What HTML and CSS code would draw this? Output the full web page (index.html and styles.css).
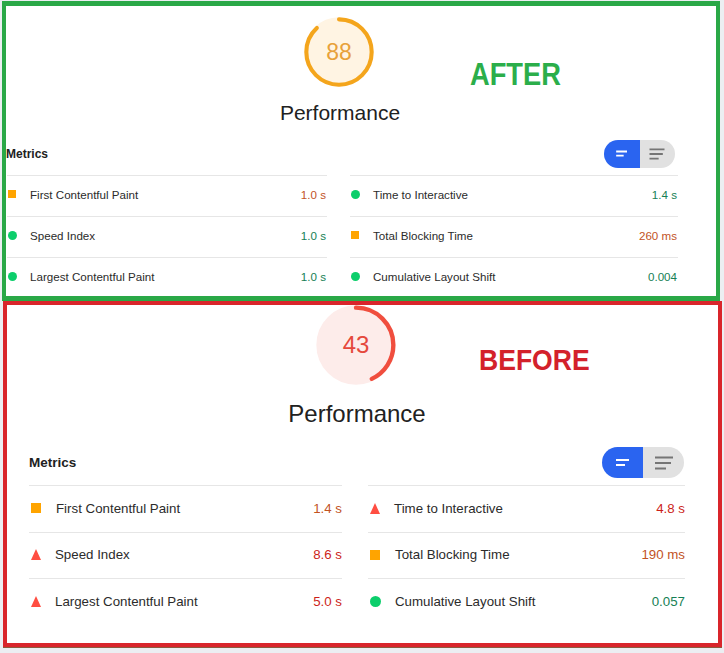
FILE: index.html
```html
<!DOCTYPE html>
<html lang="en">
<head>
<meta charset="utf-8">
<title>Performance before / after</title>
<link rel="stylesheet" href="styles.css">
</head>
<body>
<section class="shot shot-after">
  <div class="report report-after">
    <div class="gauge">
      <svg class="gauge-svg" viewBox="0 0 120 120">
        <circle class="gauge-base" cx="60" cy="60" r="56"/>
        <circle class="gauge-arc" cx="60" cy="60" r="56" stroke-dasharray="309.6 351.9" transform="rotate(-90 60 60)"/>
      </svg>
      <span class="gauge-num">88</span>
    </div>
    <div class="gauge-title">Performance</div>
    <div class="metrics-head">
      <span class="metrics-title">Metrics</span>
      <div class="toggle">
        <span class="toggle-half toggle-on">
          <svg viewBox="0 0 24 24"><path d="M5 9h13M5 14h9"/></svg>
        </span>
        <span class="toggle-half toggle-off">
          <svg viewBox="0 0 24 24"><path d="M3 6.5h18M3 12h16M3 17.5h11"/></svg>
        </span>
      </div>
    </div>
    <div class="metrics-grid">
      <div class="metric"><span class="icon icon-avg"></span><span class="label">First Contentful Paint</span><span class="value avg">1.0 s</span></div>
      <div class="metric"><span class="icon icon-pass"></span><span class="label">Time to Interactive</span><span class="value pass">1.4 s</span></div>
      <div class="metric"><span class="icon icon-pass"></span><span class="label">Speed Index</span><span class="value pass">1.0 s</span></div>
      <div class="metric"><span class="icon icon-avg"></span><span class="label">Total Blocking Time</span><span class="value avg">260 ms</span></div>
      <div class="metric"><span class="icon icon-pass"></span><span class="label">Largest Contentful Paint</span><span class="value pass">1.0 s</span></div>
      <div class="metric"><span class="icon icon-pass"></span><span class="label">Cumulative Layout Shift</span><span class="value pass">0.004</span></div>
    </div>
  </div>
  <div class="tag tag-after">AFTER</div>
</section>

<section class="shot shot-before">
  <div class="report report-before">
    <div class="gauge">
      <svg class="gauge-svg" viewBox="0 0 120 120">
        <circle class="gauge-base" cx="60" cy="60" r="56"/>
        <circle class="gauge-arc" cx="60" cy="60" r="56" stroke-dasharray="151.3 351.9" transform="rotate(-90 60 60)"/>
      </svg>
      <span class="gauge-num">43</span>
    </div>
    <div class="gauge-title">Performance</div>
    <div class="metrics-head">
      <span class="metrics-title">Metrics</span>
      <div class="toggle">
        <span class="toggle-half toggle-on">
          <svg viewBox="0 0 24 24"><path d="M5 9h13M5 14h9"/></svg>
        </span>
        <span class="toggle-half toggle-off">
          <svg viewBox="0 0 24 24"><path d="M3 6.5h18M3 12h16M3 17.5h11"/></svg>
        </span>
      </div>
    </div>
    <div class="metrics-grid">
      <div class="metric"><span class="icon icon-avg"></span><span class="label">First Contentful Paint</span><span class="value avg">1.4 s</span></div>
      <div class="metric"><span class="icon icon-fail"></span><span class="label">Time to Interactive</span><span class="value fail">4.8 s</span></div>
      <div class="metric"><span class="icon icon-fail"></span><span class="label">Speed Index</span><span class="value fail">8.6 s</span></div>
      <div class="metric"><span class="icon icon-avg"></span><span class="label">Total Blocking Time</span><span class="value avg">190 ms</span></div>
      <div class="metric"><span class="icon icon-fail"></span><span class="label">Largest Contentful Paint</span><span class="value fail">5.0 s</span></div>
      <div class="metric"><span class="icon icon-pass"></span><span class="label">Cumulative Layout Shift</span><span class="value pass">0.057</span></div>
    </div>
  </div>
  <div class="tag tag-before">BEFORE</div>
</section>
</body>
</html>
```

FILE: styles.css
```css
html, body {
  margin: 0;
  padding: 0;
}

body {
  background: #eceef2;
  font-family: "Liberation Sans", Arial, sans-serif;
  color: #212121;
  width: 724px;
  height: 653px;
  overflow: hidden;
}

.shot {
  position: relative;
  background: #ffffff;
  box-sizing: border-box;
  overflow: hidden;
}

.shot-after {
  margin: 1px 0 0 2px;
  width: 718px;
  height: 300px;
  border-style: solid;
  border-color: #2aa847;
  border-width: 5px 4px 5px 4px;
}

.shot-before {
  margin-left: 3px;
  width: 719px;
  height: 346px;
  border: 4px solid #d9252b;
  box-shadow: 0 1px 0 #8d5a3e;
}

/* ---------- report ---------- */
.report {
  display: flex;
  flex-direction: column;
}

.gauge {
  position: relative;
  display: flex;
  align-items: center;
  justify-content: center;
}

.gauge-svg {
  position: absolute;
  inset: 0;
  width: 100%;
  height: 100%;
}

.gauge-base {
  stroke-width: 7;
}

.gauge-arc {
  fill: none;
  stroke-width: 7;
  stroke-linecap: round;
}

.gauge-num {
  position: relative;
  line-height: 1;
}

.gauge-title {
  text-align: center;
}

.metrics-head {
  display: flex;
  align-items: center;
  justify-content: space-between;
}

.metrics-title {
  font-weight: bold;
}

.toggle {
  display: flex;
  border-radius: 999px;
  overflow: hidden;
}

.toggle-half {
  display: flex;
  align-items: center;
  justify-content: center;
  flex: 1;
}

.toggle-on {
  background: #2a64f0;
}

.toggle-off {
  background: #e1e1e1;
}

.toggle-on svg path {
  stroke: #ffffff;
  stroke-width: 2.2;
  fill: none;
}

.toggle-off svg path {
  stroke: #757575;
  stroke-width: 2.2;
  fill: none;
}

.metrics-grid {
  display: grid;
}

.metric {
  display: flex;
  align-items: center;
  box-sizing: border-box;
  border-top: 1px solid #e6e6e6;
}

.label {
  color: #2b2b2b;
}

.value {
  margin-left: auto;
}

.value.avg { color: #c2531f; }
.value.fail { color: #cc1f1a; }
.value.pass { color: #167f55; }

.icon {
  flex: none;
  display: block;
}

.icon-avg {
  background: #ffa400;
}

.icon-pass {
  background: #0cce6b;
  border-radius: 50%;
}

.icon-fail {
  width: 0 !important;
  height: 0 !important;
  background: transparent;
  border-style: solid;
  border-color: transparent transparent #ff4e42 transparent;
}

/* ---------- AFTER variant ---------- */
.report-after {
  width: 672px;
}

.report-after .gauge {
  width: 70px;
  height: 70px;
  margin: 11px 0 0 298px;
}

.report-after .gauge-base {
  fill: #fff4e3;
  stroke: #fff4e3;
}

.report-after .gauge-arc {
  stroke: #f4a51c;
}

.report-after .gauge-num {
  font-size: 23px;
  color: #e8a13a;
}

.report-after .gauge-title {
  margin-top: 14px;
  padding-right: 4px;
  font-size: 21px;
  line-height: 24px;
}

.report-after .metrics-head {
  margin-top: 15px;
  height: 28px;
}

.report-after .metrics-title {
  font-size: 12px;
}

.report-after .toggle {
  width: 71px;
  height: 28px;
  margin-right: 3px;
}

.report-after .toggle svg {
  width: 20px;
  height: 20px;
}

.report-after .metrics-grid {
  margin: 7px 0 0 1px;
  grid-template-columns: 320px 328px;
  column-gap: 23px;
}

.report-after .metric {
  height: 41px;
  padding-bottom: 4px;
  font-size: 11.6px;
}

.report-after .value {
  padding-right: 1px;
}

.report-after .icon {
  width: 8px;
  height: 8px;
  margin: 0 14px 0 1px;
}

.report-after .icon-pass {
  width: 9px;
  height: 9px;
  margin-right: 13px;
}

/* ---------- BEFORE variant ---------- */
.report-before {
  width: 656px;
  margin-left: 22px;
}

.report-before .gauge {
  width: 80px;
  height: 80px;
  margin: 0 0 0 287px;
}

.report-before .gauge-base {
  fill: #fdecea;
  stroke: #fdecea;
}

.report-before .gauge-arc {
  stroke: #f04e3e;
  stroke-width: 6.5;
}

.report-before .gauge-num {
  font-size: 24px;
  color: #e5483c;
}

.report-before .gauge-title {
  margin-top: 15px;
  font-size: 24px;
  line-height: 28px;
}

.report-before .metrics-head {
  margin-top: 19px;
  height: 31px;
}

.report-before .metrics-title {
  font-size: 13.5px;
}

.report-before .toggle {
  width: 82px;
  height: 31px;
  margin-right: 1px;
}

.report-before .toggle svg {
  width: 24px;
  height: 24px;
}

.report-before .metrics-grid {
  margin-top: 7px;
  grid-template-columns: 313px 317px;
  column-gap: 26px;
}

.report-before .metric {
  height: 46.5px;
  padding-bottom: 1px;
  font-size: 13.3px;
}

.report-before .icon {
  width: 10px;
  height: 10px;
  margin: 0 15px 0 2px;
}

.report-before .icon-pass {
  width: 11px;
  height: 11px;
  margin-right: 14px;
}

.report-before .icon-fail {
  border-width: 0 5.5px 11px 5.5px;
  margin-right: 14px;
}

/* ---------- annotation tags ---------- */
.tag {
  position: absolute;
  font-family: "Liberation Sans", Arial, sans-serif;
  font-weight: bold;
  transform-origin: left center;
}

.tag-after {
  left: 464px;
  top: 54px;
  font-size: 31px;
  line-height: 30px;
  transform: scaleX(0.88);
  color: #2bae4a;
}

.tag-before {
  left: 472px;
  top: 40px;
  font-size: 29.5px;
  line-height: 29px;
  transform: scaleX(0.9);
  color: #d3212b;
}
```
